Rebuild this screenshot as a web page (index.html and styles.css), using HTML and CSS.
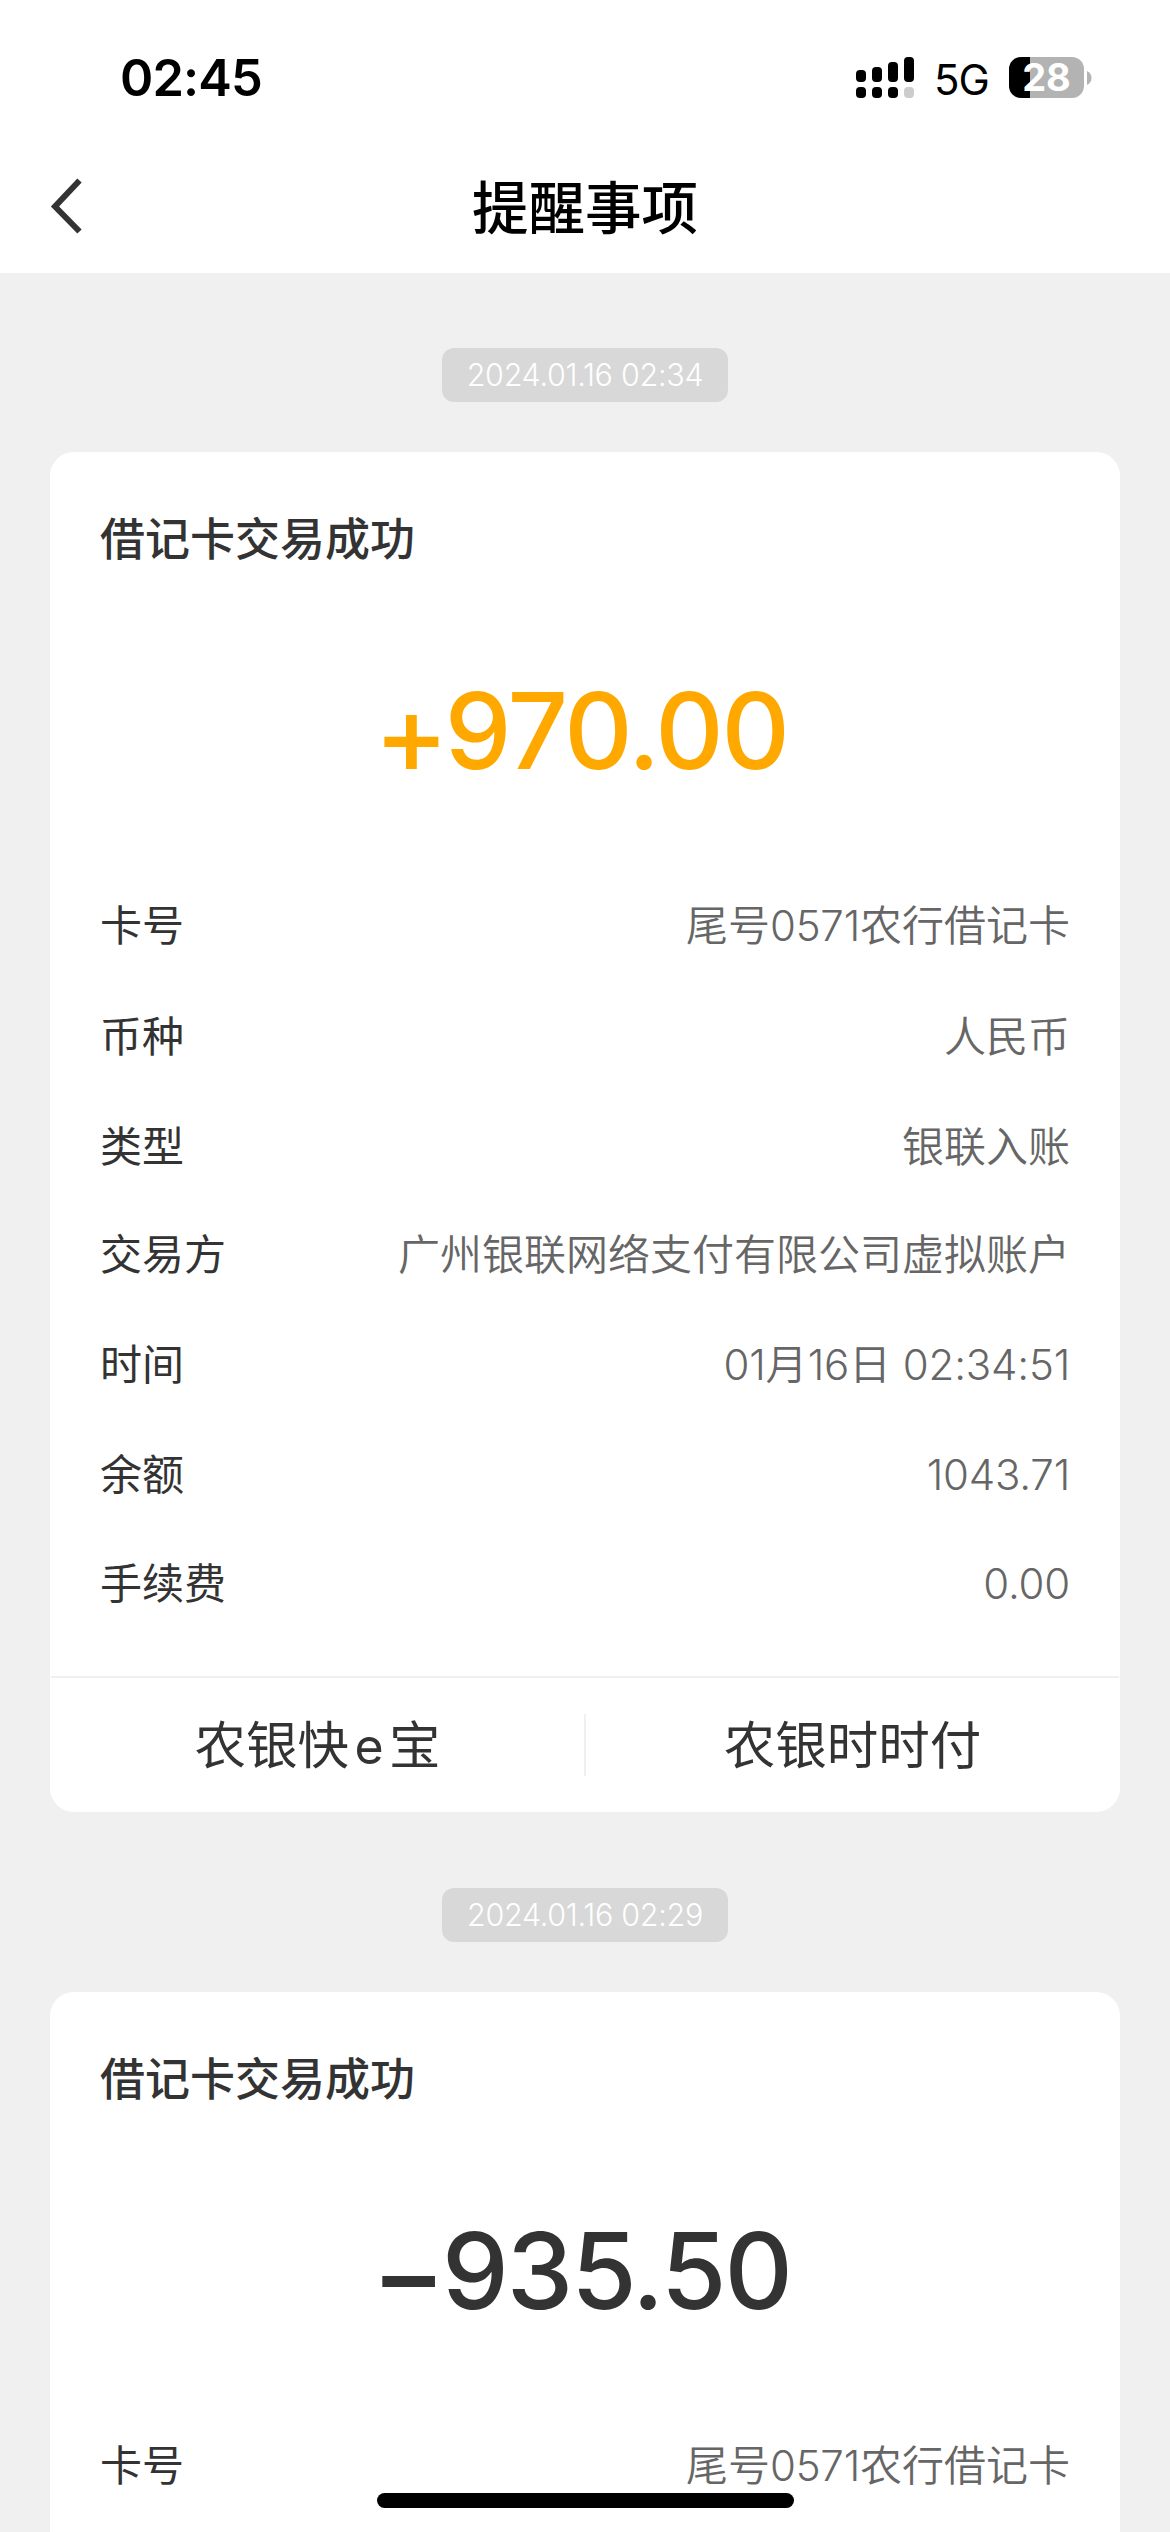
FILE: index.html
```html
<!DOCTYPE html>
<html lang="zh-CN">
<head>
<meta charset="utf-8">
<title>提醒事项</title>
<link rel="stylesheet" href="styles.css">
</head>
<body>
<div class="screen">
  <header class="header">
    <div class="status">
      <span class="clock">02:45</span>
      <div class="indicators">
        <svg class="signal" width="58" height="41" viewBox="0 0 58 41">
          <rect x="0" y="13" width="10" height="12" rx="4"/>
          <rect x="16" y="10" width="10" height="15" rx="4"/>
          <rect x="32" y="5" width="10" height="20" rx="4"/>
          <rect x="48" y="0" width="10" height="25" rx="4"/>
          <rect x="0" y="30" width="10" height="11" rx="4"/>
          <rect x="16" y="30" width="10" height="11" rx="4"/>
          <rect x="32" y="30" width="10" height="11" rx="4"/>
          <rect x="48" y="30" width="10" height="11" rx="4" fill="#ccc"/>
        </svg>
        <span class="network">5G</span>
        <div class="battery">
          <div class="battery-body">28</div>
          <svg width="5" height="14" viewBox="0 0 5 14"><path d="M0 0C3 1.5 4.500 4 4.500 7S3 12.500 0 14Z" fill="#b3b3b3"/></svg>
        </div>
      </div>
    </div>
    <nav class="navbar">
      <svg class="back" width="34" height="56" viewBox="0 0 34 56"><path d="M30.500 2.500L6 28.500L30.500 53.500" fill="none" stroke="#333" stroke-width="6"/></svg>
      <h1 class="title">提醒事项</h1>
    </nav>
  </header>

  <main class="feed">
    <time class="stamp">2024.01.16 02:34</time>
    <section class="card">
      <h2 class="card-title">借记卡交易成功</h2>
      <div class="amount income"><span class="sign">+</span>970.00</div>
      <dl class="details">
        <dt>卡号</dt><dd>尾号<span class="num">0571</span>农行借记卡</dd>
        <dt>币种</dt><dd>人民币</dd>
        <dt>类型</dt><dd>银联入账</dd>
        <dt>交易方</dt><dd>广州银联网络支付有限公司虚拟账户</dd>
        <dt>时间</dt><dd><span class="num">01</span>月<span class="num">16</span>日 <span class="num">02:34:51</span></dd>
        <dt>余额</dt><dd><span class="num">1043.71</span></dd>
        <dt>手续费</dt><dd><span class="num">0.00</span></dd>
      </dl>
      <div class="actions">
        <a class="action">农银快<span class="letter">e</span>宝</a>
        <span class="divider"></span>
        <a class="action">农银时时付</a>
      </div>
    </section>

    <time class="stamp">2024.01.16 02:29</time>
    <section class="card">
      <h2 class="card-title">借记卡交易成功</h2>
      <div class="amount"><span class="sign">−</span>935.50</div>
      <dl class="details">
        <dt>卡号</dt><dd>尾号<span class="num">0571</span>农行借记卡</dd>
      </dl>
    </section>
  </main>
  <div class="home-bar"></div>
</div>
</body>
</html>
```
FILE: styles.css
```css
* { box-sizing: border-box; margin: 0; padding: 0; }

body {
  width: 1170px;
  height: 2532px;
  overflow: hidden;
  background: #f0f0f0;
  color: #333;
  font-family: Inter, "Noto Sans CJK SC", sans-serif;
}

.screen {
  position: relative;
  width: 1170px;
  height: 2532px;
  overflow: hidden;
}

.header { height: 273px; background: #fff; }

.status {
  display: flex;
  justify-content: space-between;
  height: 141px;
  padding: 48px 78px 0 120px;
  color: #000;
}
.clock { font-size: 50.500px; font-weight: 600; line-height: 60px; letter-spacing: -0.9px; }
.indicators { display: flex; align-items: flex-start; padding-top: 9px; }
.network { margin-left: 20px; width: 56px; font-size: 42px; line-height: 45px; letter-spacing: -1px; }
.battery { display: flex; align-items: center; gap: 3px; margin-left: 19px; }
.battery-body {
  width: 75px;
  height: 41px;
  border-radius: 12px;
  background: linear-gradient(to right, #000 21px, #b3b3b3 21px);
  color: #fff;
  font-size: 38px;
  font-weight: 700;
  line-height: 41px;
  text-align: center;
}

.navbar {
  display: grid;
  grid-template-columns: 120px 1fr 120px;
  align-items: center;
  height: 132px;
}
.back { margin: -2px 0 0 49px; }
.title { padding-top: 3px; color: #000; font-size: 56.500px; font-weight: 500; line-height: 80px; text-align: center; }

.feed { display: flex; flex-direction: column; align-items: center; }

.stamp {
  width: 286px;
  height: 54px;
  margin: 75px 0 50px;
  border-radius: 12px;
  background: #d8d8d8;
  color: #fff;
  font-size: 30.500px;
  font-weight: 350;
  line-height: 54px;
  letter-spacing: -0.3px;
  text-align: center;
  white-space: nowrap;
}
.card + .stamp { margin-top: 76px; }

.card { width: 1070px; border-radius: 24px; background: #fff; }
.card-title { padding: 54px 50px 0; font-size: 45px; font-weight: 500; line-height: 68px; }
.amount {
  height: 130px;
  margin-top: 92px;
  padding-right: 8px;
  font-size: 106px;
  font-weight: 500;
  font-feature-settings: "calt" 0;
  line-height: 130px;
  letter-spacing: -2px;
  text-align: center;
}
.sign { margin-right: -2px; font-size: 112px; line-height: 0; vertical-align: -5px; }
.income { color: #ffa800; }

.details {
  display: grid;
  grid-template-columns: auto 1fr;
  grid-template-rows: 111px 111px 109px 108px 111px 110px 108px;
  align-items: center;
  margin-top: 74px;
  padding: 0 50px;
  font-size: 42px;
  line-height: 60px;
}
.details dt { font-weight: 380; }
.details dd { color: #666; font-weight: 350; text-align: right; white-space: nowrap; }
.num { letter-spacing: -0.2px; }

.actions {
  display: grid;
  grid-template-columns: 1fr 2px 1fr;
  align-items: center;
  height: 136px;
  margin: 38px 1px 0;
  border-top: 2px solid #f0f0f0;
}
.action { font-size: 51.500px; font-weight: 380; line-height: 70px; text-align: center; }
.letter { display: inline-block; width: 40px; text-align: center; font-size: 50px; }
.divider { height: 62px; background: #f0f0f0; }

.home-bar {
  position: absolute;
  left: 377px;
  top: 2493px;
  width: 417px;
  height: 15px;
  border-radius: 8px;
  background: #000;
}
```
